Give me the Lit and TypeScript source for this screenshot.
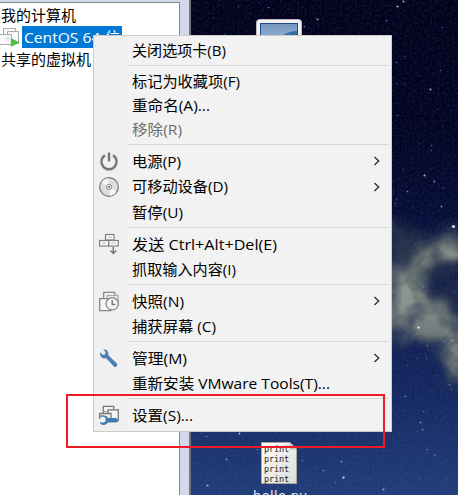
import { LitElement, html, css, svg, nothing } from "lit";
import { customElement, property } from "lit/decorators.js";

type Item = { label: string; icon?: string; sub?: boolean; off?: boolean; h?: number; w: number };

const groups: { top: number; bottom: number; items: Item[] }[] = [
  { top: 2, bottom: 2, items: [{ label: "关闭选项卡(B)", w: 94 }] },
  {
    top: 4,
    bottom: 2,
    items: [
      { label: "标记为收藏项(F)", h: 24, w: 108 },
      { label: "重命名(A)...", h: 24, w: 78 },
      { label: "移除(R)", off: true, h: 24, w: 50 },
    ],
  },
  {
    top: 4,
    bottom: 2,
    items: [
      { label: "电源(P)", icon: "power", sub: true, w: 49 },
      { label: "可移动设备(D)", icon: "disc", sub: true, h: 26, w: 96 },
      { label: "暂停(U)", w: 51 },
    ],
  },
  {
    top: 4,
    bottom: 2,
    items: [
      { label: "发送 Ctrl+Alt+Del(E)", icon: "keys", w: 145 },
      { label: "抓取输入内容(I)", w: 104 },
    ],
  },
  {
    top: 4,
    bottom: 2,
    items: [
      { label: "快照(N)", icon: "snapshot", sub: true, w: 52 },
      { label: "捕获屏幕 (C)", w: 84 },
    ],
  },
  {
    top: 4,
    bottom: 2,
    items: [
      { label: "管理(M)", icon: "wrench", sub: true, w: 55 },
      { label: "重新安装 VMware Tools(T)...", w: 198 },
    ],
  },
  { top: 4, bottom: 2, items: [{ label: "设置(S)...", icon: "settings", w: 61 }] },
];

const icons: Record<string, unknown> = {
  power: svg`<path d="M6 3.2A7.6 7.6 0 1 0 14 3.2" fill="none" stroke="#777" stroke-width="2.4"/><path d="M10 .5V9.500" stroke="#777" stroke-width="2.4"/>`,
  disc: svg`<circle cx="10" cy="10" r="9.3" fill="#dedede" stroke="#777" stroke-width="1.2"/><path d="M10 10L2.500 5.500A8.700 8.700 0 0 1 9 1.300ZM10 10L17.500 14.500A8.700 8.700 0 0 1 11 18.700Z" fill="#f6f6f6"/><circle cx="10" cy="10" r="2.700" fill="#e4e8ee" stroke="#999"/><circle cx="10" cy="10" r="1.200" fill="#888"/>`,
  keys: svg`<g fill="#f8fafd" stroke="#808080" stroke-width="1.200"><rect x="6.500" y="-.5" width="8.500" height="5.500"/><rect x=".6" y="5.500" width="9" height="5.500"/><rect x="9.800" y="5.500" width="9.500" height="5.500"/></g><path d="M8.500 2.300h4.500M3 8.300h4M12.200 8.300h4.500" stroke="#c3d2e8" stroke-width="1.500"/><path d="M14.300 12v6.500M11.400 15.500l2.900 3 2.900-3" fill="none" stroke="#777" stroke-width="1.500"/>`,
  snapshot: svg`<g fill="#f7f7f7" stroke="#858585" stroke-width="1.300"><path d="M4.700 .3h11v9h-11z"/><path d="M8 3.500h11v9H8z" stroke="#aaa"/><path d="M.7 6.700h11v12H.7z"/><circle cx="13.200" cy="11.800" r="6.100"/></g><path d="M13.200 8v4.500h3.300" fill="none" stroke="#777" stroke-width="1.500"/>`,
  wrench: svg`<path d="M1.200 3.300L4 6 6.200 5.200 6.600 3 4 .6C7.500-.3 10 2.400 9.300 6.300L17.900 14.400Q18.900 16 17.600 17.300 16.200 18.500 14.900 17.400L7.200 9.300C3.500 10.300.4 7.500 1.200 3.300Z" fill="#4b7eb5"/>`,
  settings: svg`<g fill="#f4f4f4" stroke="#777" stroke-width="1.300"><path d="M4.300 .3h10.500v9H4.300z"/><path d="M9 3.800h10.300v11H9z"/><path d="M12 14V7.500H.7V13" fill="#f0f0f0"/></g><path d="M3.500 5.500h5.500" stroke="#aaa"/><path d="M.6 10.700H5L6.600 12.200V15.200L5 16.600H.6C1.500 19.800 7.300 20 8.900 16.600H16.600C19.500 16.400 19.500 12.200 16.600 12.100H9C7.500 8.800 1.800 8.500.6 10.700Z" fill="#4079b1"/>`,
};

@customElement("menu-row")
class MenuRow extends LitElement {
  @property({ attribute: false }) item!: Item;
  static styles = css`
    :host { display: block; }
    .row { display: grid; grid-template-columns: 38px 1fr 18px; align-items: center; }
    .icon { width: 20px; height: 20px; display: block; margin-left: 5px; overflow: visible; }
    .text { white-space: pre; display: block; height: 24px; overflow: visible; width: 210px; }
    text { font: 15px "Open Sans", "Noto Sans CJK SC", sans-serif; fill: #000; }
    .off text { fill: #6d6d6d; }
    .arrow { width: 8px; height: 10px; display: block; margin-bottom: 1px; }
  `;
  render() {
    const i = this.item;
    return html`<div class="row" style="height:${i.h ?? 25}px">
      <span>${i.icon ? html`<svg class="icon" viewBox="0 0 20 20">${icons[i.icon]}</svg>` : nothing}</span>
      <span class=${i.off ? "off" : ""}><svg class="text"><text x="0" y="16.500" textLength=${i.w} lengthAdjust="spacingAndGlyphs">${i.label}</text></svg></span>
      <span>${i.sub ? html`<svg class="arrow" viewBox="0 0 8 10"><path d="M1.500 1L5.700 5L1.500 9" fill="none" stroke="#333" stroke-width="1.400"/></svg>` : nothing}</span>
    </div>`;
  }
}

const stars: [number, number, number, string][] = [
  [238, 6, 1, "#37529b"], [268, 7, 1, "#607fc0"], [258, 2, 1, "#203b88"], [289, 9, 0.8, "#26387c"], [302, 7, 0.8, "#303e7c"],
  [317, 19, 1.2, "#8fa2d8"], [304, 26, 1, "#5269b4"], [341, 15, 0.8, "#223375"], [386, 20, 1, "#6275b5"], [397, 6, 1.3, "#b4a8e8"],
  [403, 1, 1.2, "#a9a9d0"], [442, 27, 1, "#4458a0"], [224, 34, 0.8, "#31509a"], [396, 62, 1, "#3b59a5"], [404, 56, 1, "#2b4289"],
  [430, 49, 0.8, "#1d2b6e"], [440, 70, 1, "#414f93"], [396, 83, 1, "#3c4a91"], [404, 84, 0.8, "#32479a"], [430, 89, 1.2, "#aab3bf"],
  [397, 115, 1, "#455eaa"], [437, 109, 0.8, "#293983"], [450, 110, 0.8, "#303b7c"], [431, 145, 1.1, "#304aa4"],
  [431, 150, 0.9, "#4f68bf"], [403, 169, 0.9, "#2f4c9e"], [424, 175, 1.2, "#adb3cf"], [434, 181, 1.1, "#7a8cc2"],
  [407, 191, 1, "#8990ae"], [443, 187, 0.8, "#3f5294"], [396, 199, 0.9, "#4353a0"], [395, 203, 0.9, "#4c62b5"],
  [441, 206, 1.1, "#8795bd"], [453, 226, 1.9, "#c7e0ff"], [414, 244, 0.7, "#4a6078"], [423, 286, 1, "#7290aa"], [454, 291, 0.9, "#4c66a8"],
  [400, 303, 1, "#6c8db4"], [410, 298, 0.8, "#526f9e"], [418, 327, 1.5, "#bde0de"], [452, 340, 1, "#a2b9cc"], [444, 341, 1, "#607dbd"],
  [428, 341, 0.8, "#4c69ae"], [427, 345, 1, "#5877bc"], [426, 358, 0.9, "#405ea8"], [417, 358, 0.8, "#3c58aa"], [407, 365, 0.8, "#3b569d"],
  [436, 374, 0.8, "#384e9a"], [449, 384, 1, "#5773bb"], [451, 389, 1, "#4766b2"], [405, 396, 1, "#5a79bc"], [423, 411, 0.9, "#486ab3"],
  [420, 422, 1.1, "#7992ca"], [422, 429, 1, "#8098c9"], [427, 449, 1, "#5577c0"], [434, 455, 1, "#627fbb"], [446, 478, 0.9, "#4561a0"],
  [418, 478, 0.8, "#416399"], [383, 489, 1.2, "#94a8cb"], [343, 477, 1.4, "#acbee5"], [341, 461, 1.1, "#7d98d6"], [323, 470, 1, "#7e99cc"],
  [302, 460, 1, "#5c76b3"], [335, 482, 0.9, "#5275ba"], [239, 433, 1.1, "#a2b9e0"], [206, 436, 1, "#5581bb"], [226, 459, 1.1, "#829dd1"],
  [207, 485, 1.2, "#9abadb"], [317, 431, 1, "#6b86b1"], [257, 449, 1, "#6587bd"],
];

@customElement("desktop-view")
class DesktopView extends LitElement {
  static styles = css`
    :host { display: block; overflow: hidden; }
    svg { display: block; width: 267px; height: 495px; }
    .code { font: 8.5px "DejaVu Sans Mono", monospace; fill: #222; }
    .name { font: 13px "DejaVu Sans", sans-serif; fill: #e4e8f2; }
  `;
  render() {
    return html`<svg viewBox="191 0 267 495">
      <defs>
        <linearGradient id="sky" x1="0" y1="0" x2="0" y2="1">
          <stop offset="0" stop-color="#000019"/><stop offset=".25" stop-color="#01021f"/>
          <stop offset=".4" stop-color="#040a30"/><stop offset=".6" stop-color="#0d1a4c"/>
          <stop offset=".78" stop-color="#13265d"/><stop offset="1" stop-color="#213d7a"/>
        </linearGradient>
        <linearGradient id="scr" x1="0" y1="0" x2="0" y2="1"><stop offset="0" stop-color="#7396bf"/><stop offset="1" stop-color="#b1c4dc"/></linearGradient>
        <linearGradient id="page" x1="0" y1="0" x2="1" y2="1"><stop offset="0" stop-color="#fff"/><stop offset="1" stop-color="#dcdcd8"/></linearGradient>
        <filter id="mist" filterUnits="userSpaceOnUse" x="340" y="170" width="170" height="260" color-interpolation-filters="sRGB">
          <feTurbulence type="fractalNoise" baseFrequency=".05" numOctaves="3" seed="5" result="n"/>
          <feGaussianBlur in="SourceGraphic" stdDeviation="5" result="b"/>
          <feDisplacementMap in="b" in2="n" scale="18" xChannelSelector="R" yChannelSelector="G"/>
          <feGaussianBlur stdDeviation="2.500" result="c"/>
          <feColorMatrix in="n" values="0 0 0 0 1  0 0 0 0 1  0 0 0 0 1  0 0 2.200 0 -.4" result="m"/>
          <feComposite in="c" in2="m" operator="arithmetic" k1=".55" k2=".6"/>
        </filter>
        <filter id="grain" x="0" y="0" width="100%" height="100%">
          <feTurbulence type="fractalNoise" baseFrequency=".4" numOctaves="2" seed="3"/>
          <feColorMatrix values="0 0 0 0 .1  0 0 0 0 .16  0 0 0 0 .4  .8 .8 0 0 -.62"/>
        </filter>
      </defs>
      <rect x="191" width="267" height="495" fill="url(#sky)"/>
      <g filter="url(#mist)">
        <path d="M370 215L410 228L440 230L490 225V385H450L430 345L380 340Z" fill="#303c4c" opacity=".65"/>
        <path d="M370 285L400 266L424 246L445 241L490 240V258L446 259L424 274L422 288L440 302L456 318L490 350V378L456 376L444 360L440 336L420 340L404 338L370 318Z" fill="#6a7371" opacity=".95"/>
        <path d="M370 276L408 279L425 290L442 306L440 318L420 312L370 300Z" fill="#848b82" opacity=".75"/>
        <path d="M424 243H490V252L448 253Z" fill="#92968c" opacity=".85"/>
        <path d="M429 273L450 266L490 268V322L464 312L442 292Z" fill="#121e42" opacity=".8"/>
      </g>
      <rect x="191" width="267" height="495" filter="url(#grain)" opacity=".3"/>
      ${stars.map(([x, y, r, c]) => svg`<circle cx=${x + 0.5} cy=${y + 0.5} r=${r * 0.85} fill=${c}/>`)}
      <rect x="256.500" y="19.500" width="45" height="36" rx="3" fill="#f4f1f2" stroke="#bdb8bd"/>
      <rect x="260.500" y="23.500" width="37" height="28" fill="url(#scr)" stroke="#1f4c87"/>
      <path d="M282 36Q289 31 297 31V36Z" fill="#3a6ca3"/>
      <path d="M261.500 442.500H290L296.500 449V483.500H261.500Z" fill="url(#page)" stroke="#a8a894"/>
      ${[452, 462, 472, 482].map((y) => svg`<text class="code" x="264" y=${y} textLength="25">print</text>`)}
      <path d="M289 443L290 450L296 449.500Z" fill="#c6c6c1"/>
      <text class="name" x="253" y="500" textLength="54">hello.py</text>
    </svg>`;
  }
}

@customElement("app-root")
class AppRoot extends LitElement {
  static styles = css`
    :host { display: block; position: relative; width: 458px; height: 495px; overflow: hidden; background: #d2d9ed; }
    .window { display: grid; grid-template-columns: 180px 11px 267px; height: 495px; }
    .tree { margin-top: 2px; border-top: 1px solid #828790; border-right: 1px solid #828790; background: #fff; padding-top: 1px; }
    .edge { border-right: 2px solid #73757d; }
    .node { height: 22px; display: flex; align-items: center; }
    .node svg.label { height: 22px; width: 120px; overflow: visible; }
    text { font: 15px "Open Sans", "Noto Sans CJK SC", sans-serif; fill: #000; }
    .vm { width: 20px; height: 20px; margin-right: 2px; }
    .selected { background: #0078d7; width: 100px; height: 22px; display: block; }
    .selected text { fill: #fff; }
    .menu { position: absolute; left: 93px; top: 35px; width: 297px; height: 395px; border: 1px solid #ccc;
      background: linear-gradient(90deg, #f0f0f0 34px, #f2f2f2 34px); }
    .sep { height: 1px; background: #d7d7d7; margin: 0 2px 0 34px; }
    .mark { position: absolute; left: 66px; top: 394px; width: 315px; height: 50px; border: 2px solid #ee1c25; }
  `;
  render() {
    return html`<div class="window">
        <div class="tree">
          <div class="node"><svg class="label"><text x="1" y="16.500" textLength="75">我的计算机</text></svg></div>
          <div class="node">
            <svg class="vm" viewBox="0 0 20 20">
              <g fill="#fafafa" stroke="#aaa"><path d="M3.500 1.500h12v11h-12z"/><path d="M7.500 4.500h11v12h-11z"/><path d="M-1 7.500h12.500v10H-1z"/></g>
              <path d="M8 8.500v7M5 11.500h5" stroke="#d5dceb"/>
              <path d="M10.800 11V20L19.500 15.500Z" fill="#57bd47"/>
            </svg>
            <span class="selected"><svg class="label"><text x="2" y="16.500" textLength="96" lengthAdjust="spacingAndGlyphs">CentOS 64 位</text></svg></span>
          </div>
          <div class="node"><svg class="label"><text x="1" y="16.500" textLength="90">共享的虚拟机</text></svg></div>
        </div>
        <div class="edge"></div>
        <desktop-view></desktop-view>
      </div>
      <div class="menu">
        ${groups.map(
          (g, n) => html`${n ? html`<div class="sep"></div>` : nothing}
            <div style="padding:${g.top}px 0 ${g.bottom}px">${g.items.map((i) => html`<menu-row .item=${i}></menu-row>`)}</div>`,
        )}
      </div>
      <div class="mark"></div>`;
  }
}
